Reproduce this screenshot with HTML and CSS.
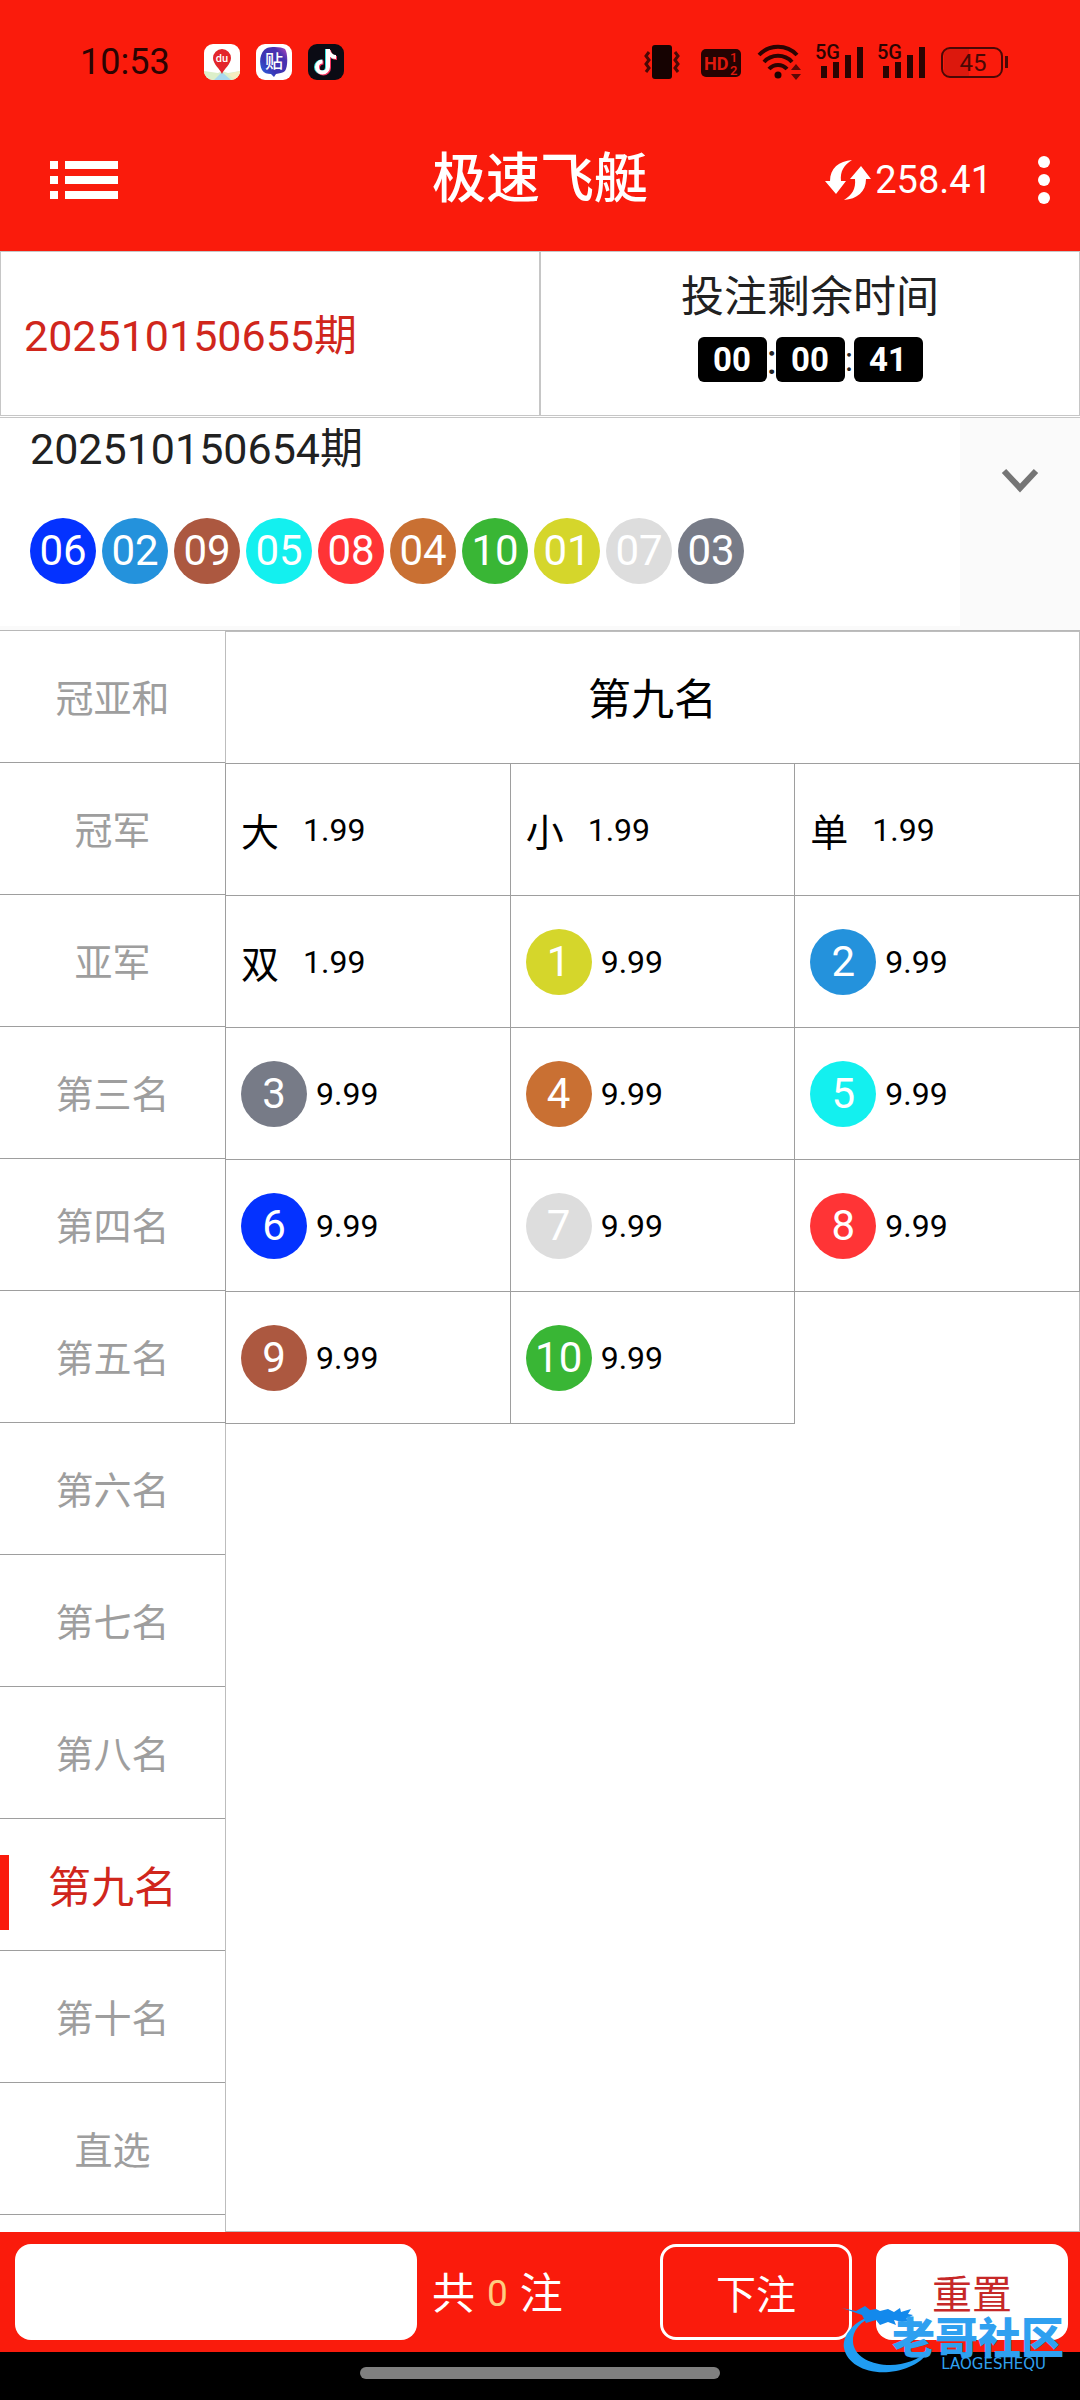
FILE: index.html
```html
<!DOCTYPE html>
<html lang="zh-CN">
<head>
<meta charset="utf-8">
<meta name="viewport" content="width=device-width, initial-scale=1">
<title>极速飞艇</title>
<link rel="stylesheet" href="styles.css">
</head>
<body>
<div class="app">
  <header class="top">
    <div class="status">
      <span class="clock">10:53</span>
      <div class="status-apps">
        <svg width="36" height="36" viewBox="0 0 36 36" aria-hidden="true">
          <rect width="36" height="36" rx="9" fill="#fff"/>
          <path d="M0 27 14 29 18 27 24 29 36 27V27A9 9 0 0 1 27 36H9A9 9 0 0 1 0 27Z" fill="#dcefc9"/>
          <path d="M10 36 18 28 27 36Z" fill="#a9d8ee"/>
          <path d="M24 30 36 27V28A9 9 0 0 1 30 35Z" fill="#f5ecc0"/>
          <path d="M18 30C16 25 9 20 9 14a9 9 0 0 1 18 0c0 6-7 11-9 16Z" fill="#e3262c"/>
          <text x="18" y="18" class="pin-text">du</text>
        </svg>
        <svg width="36" height="36" viewBox="0 0 36 36" aria-hidden="true">
          <defs><linearGradient id="tie" x1="0" y1="1" x2="1" y2="0"><stop offset="0" stop-color="#2a6fe8"/><stop offset=".35" stop-color="#3a35b4"/><stop offset=".75" stop-color="#4a31b0"/><stop offset="1" stop-color="#c04ac0"/></linearGradient></defs>
          <rect width="36" height="36" rx="9" fill="#fff"/>
          <path d="M11 4C17 2 26 3 29 5c3 4 3 18 0 22-2 2-6 2-9 3l-2 3-3-3C11 30 8 29 6 26 3 20 3 8 11 4Z" fill="url(#tie)"/>
          <text x="18" y="24" class="tie-text">贴</text>
        </svg>
        <svg width="36" height="36" viewBox="0 0 36 36" aria-hidden="true">
          <rect width="36" height="36" rx="9" fill="#0b0b14"/>
          <g fill="none" stroke-width="4">
            <path d="M19 5V23a5.500 5.500 0 1 1-5.500-5.500M19 6c1 4 4 7 8 7" stroke="#35e3e0"/>
            <path d="M21 6V24a5.500 5.500 0 1 1-5.500-5.500M21 7c1 4 4 7 8 7" stroke="#f5335f"/>
            <path d="M20 5V23a5.500 5.500 0 1 1-5.500-5.500M20 6c1 4 4 7 8 7" stroke="#fff"/>
          </g>
        </svg>
      </div>
      <div class="status-icons">
        <svg width="40" height="36" viewBox="0 0 40 36" aria-hidden="true">
          <rect x="7" y="1" width="20" height="34" rx="3" fill="#160302"/>
          <path d="M4 8 1 12l3 4-3 4 3 4-3 4M30 8l3 4-3 4 3 4-3 4 3 4" fill="none" stroke="#4a0805" stroke-width="3"/>
        </svg>
        <svg width="40" height="36" viewBox="0 0 40 36" aria-hidden="true">
          <rect y="5" width="40" height="28" rx="5" fill="#250302"/>
          <text x="3" y="26" class="hd-text">HD</text>
          <text x="29" y="18" class="hd-sub">1</text>
          <text x="29" y="31" class="hd-sub">2</text>
        </svg>
        <svg width="44" height="36" viewBox="0 0 44 36" aria-hidden="true">
          <g fill="none" stroke="#2b0402" stroke-width="4"><path d="M2 11a26 26 0 0 1 38 0"/><path d="M7 18a19 19 0 0 1 28 0"/><path d="M12 25a12 12 0 0 1 18 0"/></g>
          <circle cx="21" cy="31" r="3.500" fill="#1a0302"/>
          <path d="M39 20l5 6H34ZM39 36l5-6H34Z" fill="#5c0906"/>
        </svg>
        <svg width="46" height="36" viewBox="0 0 46 36" aria-hidden="true">
          <text x="-2" y="15" class="net-text">5G</text>
          <path d="M4 22h6v12H4ZM16 18h6v16h-6ZM28 11h6v23h-6ZM40 3h6v31h-6Z" fill="#2b0402"/>
        </svg>
        <svg width="46" height="36" viewBox="0 0 46 36" aria-hidden="true">
          <text x="-2" y="15" class="net-text">5G</text>
          <path d="M4 22h6v12H4ZM16 18h6v16h-6ZM28 11h6v23h-6ZM40 3h6v31h-6Z" fill="#2b0402"/>
        </svg>
        <svg width="67" height="36" viewBox="0 0 67 36" aria-hidden="true">
          <path d="M9 5H28V33H9Q3 33 3 27V11Q3 5 9 5Z" fill="#dc180d"/>
          <rect x="1" y="4" width="60" height="29" rx="8" fill="none" stroke="#4a0805" stroke-width="2"/>
          <path d="M64 12h3v12h-3Z" fill="#4a0805"/>
          <text x="32" y="27" class="battery-text">45</text>
        </svg>
      </div>
    </div>
    <div class="bar">
      <button class="icon-btn menu" aria-label="菜单">
        <svg width="68" height="38" viewBox="0 0 68 38"><path d="M0 0h8v8H0ZM15 0h53v8H15ZM0 15h8v8H0ZM15 15h53v8H15ZM0 30h8v8H0ZM15 30h53v8H15Z" fill="#fff"/></svg>
      </button>
      <h1 class="title">极速飞艇</h1>
      <div class="bar-right">
        <button class="balance" aria-label="刷新余额">
          <svg width="46" height="42" viewBox="0 0 46 42"><path d="M27 1C14 2 5 9 5 22H0L11 35 21 22H16C15 12 19 6 27 1ZM19 41C32 40 41 33 41 20h5L36 7 25 20h5c1 10-3 16-11 21Z" fill="#fff"/></svg>
          <span>258.41</span>
        </button>
        <button class="icon-btn" aria-label="更多">
          <svg width="12" height="48" viewBox="0 0 12 48"><circle cx="6" cy="6" r="6" fill="#fff"/><circle cx="6" cy="24" r="6" fill="#fff"/><circle cx="6" cy="42" r="6" fill="#fff"/></svg>
        </button>
      </div>
    </div>
  </header>

  <section class="period">
    <div class="period-cell current">202510150655期</div>
    <div class="period-cell countdown">
      <div class="countdown-label">投注剩余时间</div>
      <div class="timer"><b>00</b><span class="colon big">:</span><b>00</b><span class="colon">:</span><b>41</b></div>
    </div>
  </section>

  <section class="result">
    <div class="result-main">
      <div class="result-period">202510150654期</div>
      <div class="balls">
        <span class="ball c6">06</span><span class="ball c2">02</span><span class="ball c9">09</span><span class="ball c5">05</span><span class="ball c8">08</span><span class="ball c4">04</span><span class="ball c10">10</span><span class="ball c1">01</span><span class="ball c7">07</span><span class="ball c3">03</span>
      </div>
    </div>
    <button class="expand" aria-label="展开">
      <svg width="36" height="24" viewBox="0 0 36 24"><path d="M2 2 18 19 34 2" fill="none" stroke="#757575" stroke-width="6"/></svg>
    </button>
  </section>

  <main class="play">
    <nav class="ranks">
      <button class="rank">冠亚和</button>
      <button class="rank">冠军</button>
      <button class="rank">亚军</button>
      <button class="rank">第三名</button>
      <button class="rank">第四名</button>
      <button class="rank">第五名</button>
      <button class="rank">第六名</button>
      <button class="rank">第七名</button>
      <button class="rank">第八名</button>
      <button class="rank active">第九名</button>
      <button class="rank">第十名</button>
      <button class="rank">直选</button>
    </nav>
    <section class="board">
      <h2 class="board-title">第九名</h2>
      <div class="odds">
        <button class="bet"><span class="word">大</span><span>1.99</span></button>
        <button class="bet"><span class="word">小</span><span>1.99</span></button>
        <button class="bet"><span class="word">单</span><span>1.99</span></button>
        <button class="bet"><span class="word">双</span><span>1.99</span></button>
        <button class="bet"><span class="ball c1">1</span><span>9.99</span></button>
        <button class="bet"><span class="ball c2">2</span><span>9.99</span></button>
        <button class="bet"><span class="ball c3">3</span><span>9.99</span></button>
        <button class="bet"><span class="ball c4">4</span><span>9.99</span></button>
        <button class="bet"><span class="ball c5">5</span><span>9.99</span></button>
        <button class="bet"><span class="ball c6">6</span><span>9.99</span></button>
        <button class="bet"><span class="ball c7">7</span><span>9.99</span></button>
        <button class="bet"><span class="ball c8">8</span><span>9.99</span></button>
        <button class="bet"><span class="ball c9">9</span><span>9.99</span></button>
        <button class="bet"><span class="ball c10">10</span><span>9.99</span></button>
      </div>
    </section>
  </main>

  <footer class="footer">
    <div class="slip">
      <input class="amount" type="text" aria-label="金额">
      <div class="count"><span>共</span><span class="num">0</span><span>注</span></div>
      <button class="action outline">下注</button>
      <button class="action solid">重置</button>
    </div>
    <div class="home"><span class="pill"></span></div>
    <div class="mark">
      <svg class="mark-logo" width="90" height="70" viewBox="0 0 90 70" aria-hidden="true">
        <path d="M34 9C12 13 0 30 2 42 5 58 24 68 47 66 67 64 82 55 86 45 76 54 60 60 45 59 26 58 12 49 11 36 10 25 18 15 34 9Z" fill="#209df2"/>
        <path d="M0 2 14 5 23 0 28 4 34 3 38 5 46 3 52 6 58 2 59 6 69 3 66 8 71 9 64 13 70 14 60 16 52 14 54 19 46 16 38 19 34 14 24 17 20 9Z" fill="#1389ec"/>
      </svg>
      <div class="mark-text"><strong>老哥社区</strong><small>LAOGESHEQU</small></div>
    </div>
  </footer>
</div>
</body>
</html>
```
FILE: styles.css
```css
* { box-sizing: border-box; }

body {
  margin: 0;
  background: #fff;
  color: #212121;
  font-family: Roboto, "Noto Sans CJK SC", sans-serif;
}

button, input {
  margin: 0;
  padding: 0;
  border: 0;
  background: none;
  color: inherit;
  font: inherit;
}

svg {
  display: block;
  flex: none;
  overflow: visible;
}

.app {
  display: flex;
  flex-direction: column;
  height: 100vh;
}

/* Header */
.top { background: #fa1b0c; }

.status {
  display: flex;
  align-items: center;
  padding: 44px 72px 28px 80px;
}

.clock {
  color: #2b0402;
  font-size: 36px;
  line-height: 36px;
}

.status-apps {
  display: flex;
  gap: 16px;
  margin-left: 34px;
}

.status-icons {
  display: flex;
  gap: 16px;
  margin-left: auto;
}

.pin-text { fill: #fff; font-size: 11px; font-weight: 500; text-anchor: middle; }
.tie-text { fill: #fff; font-size: 18px; font-weight: 500; text-anchor: middle; }
.hd-text { fill: #e0190d; font-size: 18px; font-weight: 700; }
.hd-sub { fill: #e0190d; font-size: 13px; font-weight: 500; }
.net-text { fill: #2b0402; font-size: 20px; font-weight: 500; }
.battery-text { fill: #4a0805; font-size: 24px; text-anchor: middle; }

.bar {
  display: grid;
  grid-template-columns: 1fr auto 1fr;
  align-items: center;
  height: 143px;
  padding: 0 30px;
  color: #fff;
}

.menu {
  justify-self: start;
  margin-left: 20px;
}

.title {
  margin: 0;
  font-size: 54px;
  font-weight: 500;
  line-height: 72px;
}

.bar-right {
  display: flex;
  align-items: center;
  justify-content: flex-end;
  gap: 46px;
}

.balance {
  display: flex;
  align-items: center;
  gap: 4px;
  font-size: 38px;
  line-height: 42px;
}

/* Current period and countdown */
.period {
  display: grid;
  grid-template-columns: 1fr 1fr;
  margin-bottom: 1px;
  font-size: 43px;
}

.period-cell {
  height: 165px;
  border: 1px solid #c6c6c6;
}

.current {
  display: flex;
  align-items: center;
  padding: 0 0 4px 23px;
  color: #d0261c;
}

.countdown {
  display: flex;
  flex-direction: column;
  align-items: center;
  padding-top: 20px;
}

.countdown-label { line-height: 50px; }

.timer {
  display: flex;
  align-items: center;
  margin-top: 15px;
}

.timer b {
  width: 69px;
  border-radius: 6px;
  background: #000;
  color: #fff;
  font-size: 33px;
  font-weight: 700;
  line-height: 45px;
  text-align: center;
}

.colon {
  width: 9px;
  font-size: 33px;
  line-height: 45px;
  text-align: center;
}

.colon.big { font-size: 43px; }

/* Last result */
.result {
  display: flex;
  border-top: 1px solid #c6c6c6;
  border-bottom: 1px solid #b8b8b8;
}

.result-main {
  flex: 1;
  padding: 7px 0 42px 30px;
  border-bottom: 4px solid #fafafa;
}

.result-period {
  font-size: 43px;
  line-height: 48px;
}

.balls {
  display: flex;
  gap: 6px;
  margin-top: 45px;
}

.ball {
  flex: none;
  width: 66px;
  border-radius: 50%;
  color: #fff;
  font-size: 42px;
  line-height: 66px;
  text-align: center;
}

.expand {
  display: flex;
  justify-content: center;
  width: 120px;
  padding-top: 51px;
  background: #fafafa;
}

.c1 { background: #d5d62b; }
.c2 { background: #2492dc; }
.c3 { background: #777b87; }
.c4 { background: #c97033; }
.c5 { background: #13f0ef; }
.c6 { background: #0432ff; }
.c7 { background: #dddddd; }
.c8 { background: #ff3436; }
.c9 { background: #ac5840; }
.c10 { background: #39b635; }

/* Rank list and odds */
.play {
  display: flex;
  flex: 1;
  min-height: 0;
}

.ranks {
  display: flex;
  flex-direction: column;
  width: 225px;
  overflow: hidden;
}

.rank {
  position: relative;
  flex: none;
  height: 132px;
  padding-bottom: 2px;
  border-bottom: 1px solid #9e9e9e;
  color: #9e9e9e;
  font-size: 38px;
}

.rank.active {
  color: #d0261c;
  font-size: 43px;
}

.rank.active::before {
  content: "";
  position: absolute;
  top: 36px;
  left: 0;
  width: 9px;
  height: 75px;
  background: #fa1b0c;
}

.board {
  flex: 1;
  border: 1px solid #bdbdbd;
  color: #000;
}

.board-title {
  margin: 0;
  padding-top: 4px;
  font-size: 43px;
  font-weight: 400;
  line-height: 128px;
  text-align: center;
}

.odds {
  display: grid;
  grid-template-columns: repeat(3, 1fr);
  margin: -1px 0 0 -1px;
}

.bet {
  display: flex;
  align-items: center;
  gap: 9px;
  height: 133px;
  margin: 0 -1px -1px 0;
  padding-left: 15px;
  border: 1px solid #9e9e9e;
  font-size: 32px;
}

.word {
  margin-right: 15px;
  font-size: 38px;
}

/* Bet slip */
.footer { position: relative; }

.slip {
  display: flex;
  align-items: center;
  height: 120px;
  padding: 0 12px 0 15px;
  background: #fa1b0c;
  color: #fff;
}

.amount {
  width: 402px;
  height: 96px;
  padding: 0 24px;
  border-radius: 16px;
  background: #fff;
  color: #212121;
  font-size: 40px;
}

.count {
  display: flex;
  align-items: center;
  flex: 1;
  gap: 12px;
  padding: 4px 0 0 15px;
  font-size: 43px;
  line-height: 48px;
}

.num {
  color: #ffcc80;
  font-size: 37px;
}

.action {
  width: 192px;
  height: 96px;
  border-radius: 16px;
  font-size: 40px;
}

.outline { border: 3px solid #fff; }

.solid {
  margin-left: 24px;
  background: #fff;
  color: #c62828;
}

.home {
  display: flex;
  justify-content: center;
  height: 48px;
  padding-top: 15px;
  background: #000;
}

.pill {
  width: 33.33%;
  height: 12px;
  border-radius: 6px;
  background: #808080;
}

/* Community mark over the footer */
.mark {
  position: absolute;
  right: 16px;
  bottom: 24px;
  width: 222px;
  height: 70px;
  color: #2fa0f0;
  pointer-events: none;
}

.mark-logo {
  position: absolute;
  top: 0;
  left: 0;
}

.mark-text {
  position: absolute;
  right: 0;
  bottom: 6px;
  display: flex;
  flex-direction: column;
  align-items: flex-end;
}

.mark-text strong {
  font-size: 43px;
  font-weight: 900;
  line-height: 38px;
}

.mark-text small {
  padding-right: 18px;
  font-family: "DejaVu Sans", sans-serif;
  font-size: 15px;
  line-height: 12px;
}
```
